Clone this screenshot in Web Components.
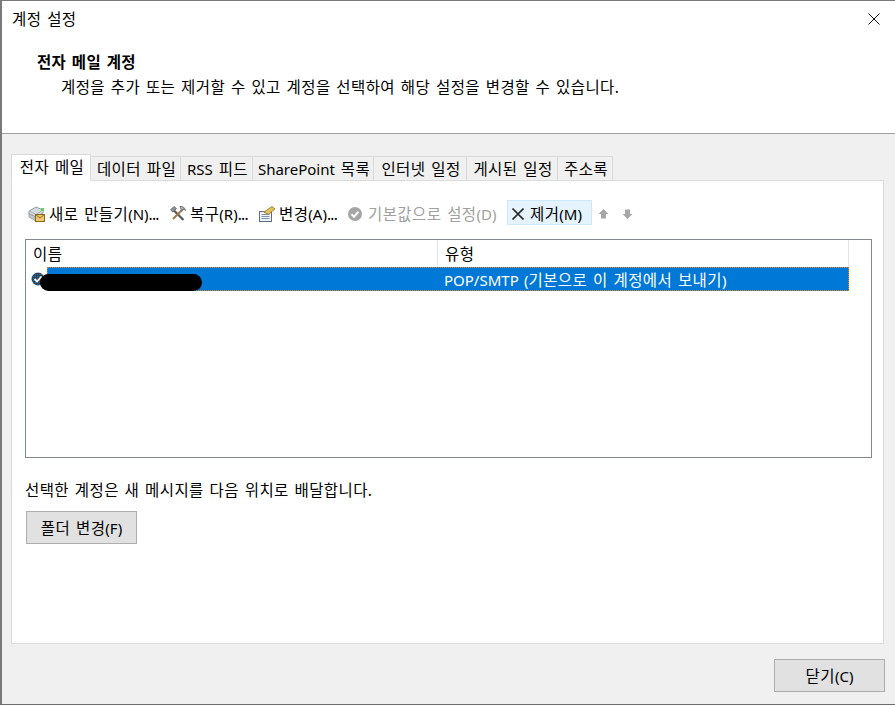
<!DOCTYPE html>
<html lang="ko">
<head>
<meta charset="utf-8">
<title>계정 설정</title>
<style>
  html, body { margin: 0; padding: 0; background: #f0f0f0; }
  body {
    font-family: "Noto Sans", "Noto Sans CJK KR", sans-serif;
    font-size: 15.5px; letter-spacing: .4px; word-spacing: 1.4px; color: #000;
  }
  .la { letter-spacing: 0; font-size: 15px; }
  .dots { letter-spacing: -.8px; }
</style>
</head>
<body>
<account-dialog>
  <span slot="title">계정 설정</span>
  <span slot="heading">전자 메일 계정</span>
  <span slot="desc">계정을 추가 또는 제거할 수 있고 계정을 선택하여 해당 설정을 변경할 수 있습니다.</span>

  <tab-strip>
    <tab-item active>전자 메일</tab-item>
    <tab-item style="width:90px">데이터 파일</tab-item>
    <tab-item style="width:72px"><span class="la">RSS</span> 피드</tab-item>
    <tab-item style="width:121px"><span class="la">SharePoint</span> 목록</tab-item>
    <tab-item style="width:93px">인터넷 일정</tab-item>
    <tab-item style="width:91px">게시된 일정</tab-item>
    <tab-item style="width:55px">주소록</tab-item>
  </tab-strip>

  <tool-bar slot="panel">
    <tool-button style="width:141px">
      <svg slot="icon" width="18" height="18" viewBox="0 0 18 18">
        <path d="M1 6 8 2l7 3v3L8 12 1 9z" fill="#d5dadd" stroke="#8f9aa3" stroke-width="1"/>
        <path d="M1 6l7 3.500L15 5" fill="none" stroke="#aab3ba"/>
        <path d="M1 9v3l6 3.500v-4z" fill="#c4cbd0" stroke="#9aa4ab"/>
        <rect x="7.500" y="9.500" width="9" height="7" fill="#edc96b" stroke="#8a6a20"/>
        <path d="M7.500 9.500l4.500 3.500 4.500-3.500" fill="none" stroke="#8a6a20"/>
        <rect x="13" y="3" width="3" height="3" fill="#5fd35f"/>
      </svg>
      새로 만들기<span class="la">(N)</span><span class="dots">...</span>
    </tool-button>
    <tool-button style="width:89px">
      <svg slot="icon" width="18" height="18" viewBox="0 0 18 18">
        <path d="M3 3.500 14.500 15" stroke="#5a5a5a" stroke-width="2.200"/>
        <path d="M15 3 4 14" stroke="#9b7a45" stroke-width="2"/>
        <path d="M1.500 5 5 1.500l2.500 2L4 7z" fill="#8b949b" stroke="#4f5559" stroke-width=".7"/>
        <path d="M11 1.500c2.500-.5 5 1 5.500 4l-2-1.500-2 1.500z" fill="#aeb5ba" stroke="#4f5559" stroke-width=".7"/>
      </svg>
      복구<span class="la">(R)</span><span class="dots">...</span>
    </tool-button>
    <tool-button style="width:88px">
      <svg slot="icon" width="18" height="18" viewBox="0 0 18 18">
        <rect x="1.500" y="6.500" width="12" height="10" fill="#eef2f6" stroke="#5f6f80"/>
        <path d="M3.500 9.500h8M3.500 11.500h8M3.500 13.500h8" stroke="#7f93a8"/>
        <path d="M6 7 14 1.500l3 2.500-7 5.500z" fill="#e6c15a" stroke="#8f7325" stroke-width=".8"/>
      </svg>
      변경<span class="la">(A)</span><span class="dots">...</span>
    </tool-button>
    <tool-button disabled style="width:162px">
      <svg slot="icon" width="18" height="18" viewBox="0 0 18 18">
        <circle cx="9" cy="9" r="7" fill="#a6a6a6"/>
        <path d="M5.500 9.200 8 11.700l4.500-5" fill="none" stroke="#fff" stroke-width="2"/>
      </svg>
      기본값으로 설정<span class="la">(D)</span>
    </tool-button>
    <tool-button hot style="width:85px">
      <svg slot="icon" width="16" height="16" viewBox="0 0 16 16">
        <path d="M2.500 2.500 13.500 13.500M13.500 2.500 2.500 13.500" stroke="#222" stroke-width="1.700"/>
      </svg>
      제거<span class="la">(M)</span>
    </tool-button>
    <tool-button arrow style="width:24px">
      <svg slot="icon" width="14" height="14" viewBox="0 0 14 14"><path d="M6.500 2 11.500 7H9v4.500H4V7H1.500z" fill="#a6a6a6"/></svg>
    </tool-button>
    <tool-button arrow style="width:24px">
      <svg slot="icon" width="14" height="14" viewBox="0 0 14 14"><path d="M6.500 12 11.500 7H9V2.500H4V7H1.500z" fill="#a6a6a6"/></svg>
    </tool-button>
  </tool-bar>

  <account-list slot="panel">
    <span slot="col-name">이름</span>
    <span slot="col-type">유형</span>
    <span slot="row-type"><span class="la">POP/SMTP (</span>기본으로 이 계정에서 보내기<span class="la">)</span></span>
  </account-list>

  <span slot="note">선택한 계정은 새 메시지를 다음 위치로 배달합니다.</span>
  <push-button slot="folder">폴더 변경<span class="la">(F)</span></push-button>
  <push-button slot="close">닫기<span class="la">(C)</span></push-button>
</account-dialog>

<script>
class AccountDialog extends HTMLElement {
  constructor() {
    super();
    this.attachShadow({ mode: 'open' }).innerHTML = `
      <style>
        :host {
          display: flex; flex-direction: column; box-sizing: border-box;
          width: 895px; height: 705px; overflow: hidden;
          background: #f0f0f0;
          border-top: 1px solid #7a7a7a; border-left: 2px solid #7a7a7a; border-bottom: 1px solid #6d6d6d;
        }
        header {
          flex: none; height: 133px; box-sizing: border-box; background: #fff;
          border-bottom: 1px solid #a0a0a0; position: relative;
          padding: 8px 0 0 10px;
        }
        .title { line-height: 20px; }
        .heading { margin: 23px 0 0 25px; line-height: 20px; font-weight: 700; letter-spacing: .3px; }
        .desc { margin: 5px 0 0 49px; line-height: 20px; }
        .close { position: absolute; right: 15px; top: 12px; width: 12px; height: 12px; }
        main { flex: 1; display: flex; flex-direction: column; padding: 20px 10px 11px 9px; min-height: 0; }
        .panel {
          flex: 1; display: flex; flex-direction: column; box-sizing: border-box; min-height: 0;
          width: 873px; background: #fff; border: 1px solid #dcdcdc;
          padding: 19px 11px 0 13px;
        }
        .note { margin-top: 21px; line-height: 22px; }
        .folder { margin: 10px 0 0 1px; }
        footer { display: flex; justify-content: flex-end; padding-top: 15px; height: 34px; }
      </style>
      <header>
        <div class="title"><slot name="title"></slot></div>
        <div class="heading"><slot name="heading"></slot></div>
        <div class="desc"><slot name="desc"></slot></div>
        <svg class="close" viewBox="0 0 12 12"><path d="M.5.500 11.500 11.500M11.500.500 .5 11.500" stroke="#111" stroke-width="1"/></svg>
      </header>
      <main>
        <slot></slot>
        <div class="panel">
          <slot name="panel"></slot>
          <div class="note"><slot name="note"></slot></div>
          <div class="folder"><slot name="folder"></slot></div>
        </div>
        <footer><slot name="close"></slot></footer>
      </main>`;
  }
}

class TabStrip extends HTMLElement {
  constructor() {
    super();
    this.attachShadow({ mode: 'open' }).innerHTML = `
      <style>
        :host { display: flex; align-items: flex-end; height: 27px; margin-bottom: -1px; position: relative; z-index: 1; }
      </style>
      <slot></slot>`;
  }
}

class TabItem extends HTMLElement {
  constructor() {
    super();
    this.attachShadow({ mode: 'open' }).innerHTML = `
      <style>
        :host {
          display: flex; align-items: center; justify-content: center; box-sizing: border-box;
          height: 25px; background: #f0f0f0; white-space: nowrap; padding-left: 2px;
          border: 1px solid #d9d9d9; border-left: none; border-bottom: 1px solid #dcdcdc;
        }
        :host([active]) {
          height: 27px; width: 80px; background: #fff; border-left: 1px solid #d9d9d9; border-bottom-color: #fff;
          padding-bottom: 3px;
        }
      </style>
      <span><slot></slot></span>`;
  }
}

class ToolBar extends HTMLElement {
  constructor() {
    super();
    this.attachShadow({ mode: 'open' }).innerHTML = `
      <style>
        :host { display: flex; align-items: center; height: 25px; flex: none; margin-bottom: 14px; margin-left: 2px; }
      </style>
      <slot></slot>`;
  }
}

class ToolButton extends HTMLElement {
  constructor() {
    super();
    this.attachShadow({ mode: 'open' }).innerHTML = `
      <style>
        :host {
          display: flex; align-items: center; gap: 3px; box-sizing: border-box; height: 25px; padding-top: 2px;
          white-space: nowrap; border: 1px solid transparent; flex: none;
        }
        :host([disabled]) { color: #a0a0a0; gap: 4px; }
        :host([hot]) { background: #e5f3ff; border-color: #cce8ff; padding-left: 2px; gap: 4px; margin-right: 4px; }
        .icon { display: flex; flex: none; }
      </style>
      <span class="icon"><slot name="icon"></slot></span><span><slot></slot></span>`;
  }
}

class AccountList extends HTMLElement {
  constructor() {
    super();
    this.attachShadow({ mode: 'open' }).innerHTML = `
      <style>
        :host {
          display: block; box-sizing: border-box; flex: none; height: 219px; width: 847px;
          background: #fff; border: 1px solid #828790; position: relative;
        }
        .head { display: grid; grid-template-columns: 412px 411px; height: 27px; }
        .head div { display: flex; align-items: center; padding-left: 7px; border-right: 1px solid #e5e5e5; }
        .row {
          display: grid; grid-template-columns: 390px 1fr; align-items: center;
          box-sizing: border-box; height: 24px; width: 802px; margin-left: 21px;
          background: #0078d7; color: #fff; border: 1px dotted #e8801a;
        }
        .type { grid-column: 2; padding-left: 6px; white-space: nowrap; }
        .check { position: absolute; left: 5px; top: 32px; }
        .blot { position: absolute; left: 14px; top: 34px; width: 162px; height: 17px; border-radius: 9px; background: #000; }
      </style>
      <div class="head">
        <div><slot name="col-name"></slot></div>
        <div><slot name="col-type"></slot></div>
      </div>
      <div class="row"><span class="type"><slot name="row-type"></slot></span></div>
      <svg class="check" width="14" height="14" viewBox="0 0 14 14">
        <defs>
          <pattern id="dither" width="2" height="2" patternUnits="userSpaceOnUse">
            <rect width="2" height="2" fill="#3a3f45"/>
            <rect width="1" height="1" fill="#0078d7"/>
          </pattern>
        </defs>
        <circle cx="7" cy="7" r="6.500" fill="url(#dither)"/>
        <path d="M3.500 7 6 9.500l4.500-5" fill="none" stroke="#fff" stroke-width="1.800"/>
      </svg>
      <div class="blot"></div>`;
  }
}

class PushButton extends HTMLElement {
  constructor() {
    super();
    this.attachShadow({ mode: 'open' }).innerHTML = `
      <style>
        :host {
          display: inline-flex; align-items: center; justify-content: center; box-sizing: border-box;
          width: 111px; height: 33px; background: #e1e1e1; border: 1px solid #adadad; white-space: nowrap;
        }
      </style>
      <span><slot></slot></span>`;
  }
}

customElements.define('account-dialog', AccountDialog);
customElements.define('tab-strip', TabStrip);
customElements.define('tab-item', TabItem);
customElements.define('tool-bar', ToolBar);
customElements.define('tool-button', ToolButton);
customElements.define('account-list', AccountList);
customElements.define('push-button', PushButton);
</script>
</body>
</html>
